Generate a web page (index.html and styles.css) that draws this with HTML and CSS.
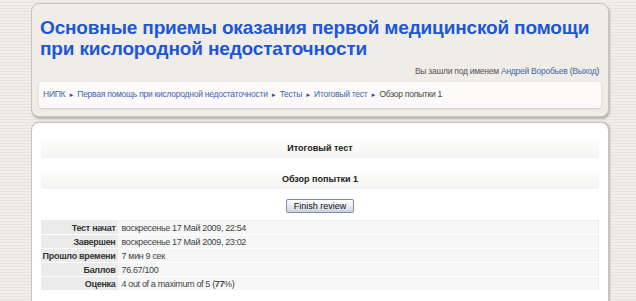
FILE: index.html
```html
<!DOCTYPE html>
<html lang="ru">
<head>
  <meta charset="UTF-8" />
  <title>Обзор попытки 1</title>
  <link rel="stylesheet" href="styles.css">
</head>
<body>
  <div class="page">
    <div class="header">
      <h1>Основные приемы оказания первой медицинской помощи при кислородной недостаточности</h1>
      <div class="logininfo">Вы зашли под именем <a href="#">Андрей Воробьев</a> (<a href="#">Выход</a>)</div>
      <div class="navbar">
        <a href="#">НИПК</a> <span class="sep">&#9658;</span>
        <a href="#">Первая помощь при кислородной недостаточности</a> <span class="sep">&#9658;</span>
        <a href="#">Тесты</a> <span class="sep">&#9658;</span>
        <a href="#">Итоговый тест</a> <span class="sep">&#9658;</span>
        Обзор попытки 1
      </div>
    </div>

    <div class="content">
      <h2 class="main-heading">Итоговый тест</h2>
      <h2 class="main-heading">Обзор попытки 1</h2>
      <div class="buttons">
        <button class="btn-review">Finish review</button>
      </div>
      <table class="summary">
        <tr><th>Тест начат</th><td>воскресенье 17 Май 2009, 22:54</td></tr>
        <tr><th>Завершен</th><td>воскресенье 17 Май 2009, 23:02</td></tr>
        <tr><th>Прошло времени</th><td>7 мин 9 сек</td></tr>
        <tr><th>Баллов</th><td>76.67/100</td></tr>
        <tr><th>Оценка</th><td>4 out of a maximum of 5 (<b>77</b>%)</td></tr>
      </table>
    </div>
  </div>
</body>
</html>
```

FILE: styles.css
```css
* {
  box-sizing: border-box;
  margin: 0;
  padding: 0;
}
body {
  font-family: "Liberation Sans", Arial, sans-serif;
  font-size: 9px;
  color: #333;
  height: 301px;
  overflow: hidden;
  background-color: #ede9e3;
  background-image: repeating-linear-gradient(180deg, #f1eee9 0, #f1eee9 2px, #e7e3dc 2px, #e7e3dc 3px);
}
a {
  color: #4068ad;
  text-decoration: none;
}
.page {
  width: 578px;
  margin: 3px 0 0 31px;
}
.header {
  background: #f0ece7;
  border: 1px solid #c9c5bd;
  border-radius: 8px;
  box-shadow: 1px 2px 2px #b9b4aa;
  padding: 13px 7px 8px 7px;
}
h1 {
  font-size: 19px;
  line-height: 21px;
  letter-spacing: -0.15px;
  color: #1b57d8;
  font-weight: bold;
  padding-left: 1px;
}
.logininfo {
  text-align: right;
  margin-top: 8px;
  padding-right: 2px;
  font-size: 8.5px;
  letter-spacing: -0.25px;
  line-height: 9px;
  color: #555;
}
.navbar {
  margin-top: 6px;
  background: #fbfaf8;
  border-radius: 3px;
  box-shadow: 0 1px 2px #cfcac2;
  padding: 7px 4px 8px 4px;
  font-size: 8.5px;
  letter-spacing: -0.25px;
  line-height: 10px;
  color: #444;
}
.navbar .sep {
  color: #2d4ca0;
  font-size: 6px;
  margin: 0 1px;
}
.content {
  margin-top: 5px;
  background: #fff;
  border: 1px solid #c9c5bd;
  border-bottom: none;
  border-radius: 8px 8px 0 0;
  box-shadow: 1px 0 2px #b9b4aa;
  padding: 14px 9px 0 9px;
  height: 181px;
}
.main-heading {
  font-size: 9px;
  line-height: 10px;
  font-weight: bold;
  color: #222;
  text-align: center;
  padding: 6px 0 5px;
  margin-bottom: 10px;
  background: linear-gradient(180deg, #ffffff 0%, #f4f3f1 100%);
  border-radius: 3px;
}
.buttons {
  text-align: center;
  margin-top: 4px;
  height: 14px;
}
.btn-review {
  font-family: "Liberation Sans", Arial, sans-serif;
  font-size: 9px;
  color: #111;
  padding: 0 7px;
  height: 14px;
  border: 1px solid #7b8ea6;
  border-radius: 2px;
  background: linear-gradient(180deg, #ffffff 0%, #e8ecf2 50%, #c7d2e0 100%);
}
.summary {
  width: 100%;
  margin-top: 7px;
  border-collapse: collapse;
  border: 1px solid #ececec;
}
.summary th,
.summary td {
  height: 14px;
  border-bottom: 1px solid #fff;
}
.summary th {
  width: 76px;
  padding: 0 2px 0 0;
  font-size: 9px;
  letter-spacing: -0.3px;
  text-align: right;
  background: #ebebeb;
  color: #333;
  white-space: nowrap;
}
.summary td {
  padding: 0 4px;
  font-size: 9px;
  letter-spacing: -0.35px;
  background: #f6f6f6;
  color: #444;
}
```
